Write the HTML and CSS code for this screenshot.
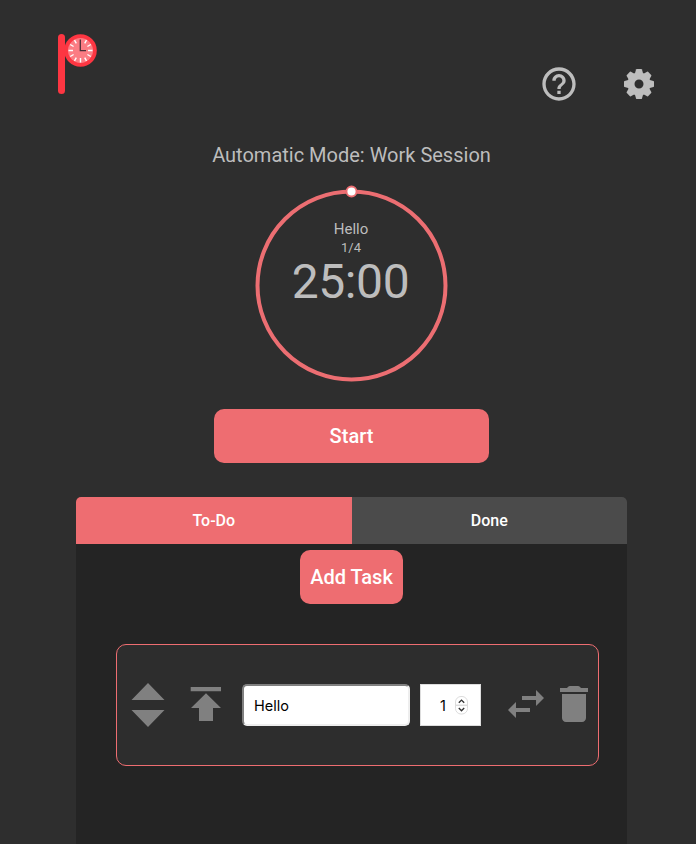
FILE: index.html
```html
<!DOCTYPE html>
<html lang="en">
<head>
<meta charset="utf-8">
<title>Pomodoro Timer</title>
<link rel="stylesheet" href="styles.css">
</head>
<body>
<header class="header">
  <svg class="logo" width="40" height="62" viewBox="0 0 40 62">
    <rect x="1" y="1" width="7" height="60" rx="3.5" fill="#fd3642"/>
    <circle cx="23.5" cy="17.5" r="16.3" fill="#fd3642"/>
    <circle cx="23.5" cy="17.5" r="12.5" fill="#fb7d84"/>
    <g stroke="#fff" stroke-width="1.4">
      <path d="M23.5 25v4.5M11.5 17.5H16M31 17.5h4.5M13.2 11.5l3.4 2M13.2 23.5l3.4-2M33.8 11.5l-3.4 2M33.8 23.5l-3.4-2M17.5 7.1l1.8 3.3M29.5 7.1l-1.8 3.3M17.5 27.9l1.8-3.3M29.5 27.9l-1.8-3.3"/>
    </g>
    <path d="M23.3 6.5v11.2H29" fill="none" stroke="#493037" stroke-width="1.3"/>
  </svg>
  <nav class="actions">
    <svg width="40" height="40" viewBox="0 0 24 24"><path d="M11 18h2v-2h-2v2zm1-16C6.48 2 2 6.48 2 12s4.48 10 10 10 10-4.48 10-10S17.52 2 12 2zm0 18c-4.41 0-8-3.59-8-8s3.59-8 8-8 8 3.59 8 8-3.59 8-8 8zm0-14c-2.21 0-4 1.79-4 4h2c0-1.1.9-2 2-2s2 .9 2 2c0 2-3 1.75-3 5h2c0-2.25 3-2.5 3-5 0-2.21-1.79-4-4-4z"/></svg>
    <svg width="36" height="36" viewBox="-18 -18 36 36">
      <defs><path id="tooth" d="M-4.2-10L-3-14.4Q-2.8-15-2.2-15H2.2Q2.8-15 3-14.4L4.2-10z"/></defs>
      <circle class="hub" r="8"/>
      <use href="#tooth"/>
      <use href="#tooth" transform="rotate(45)"/>
      <use href="#tooth" transform="rotate(90)"/>
      <use href="#tooth" transform="rotate(135)"/>
      <use href="#tooth" transform="rotate(180)"/>
      <use href="#tooth" transform="rotate(225)"/>
      <use href="#tooth" transform="rotate(270)"/>
      <use href="#tooth" transform="rotate(315)"/>
    </svg>
  </nav>
</header>
<main class="main">
  <h1 class="mode">Automatic Mode: Work Session</h1>
  <section class="timer">
    <svg class="ring" width="194" height="200" viewBox="0 0 194 200">
      <circle cx="96.5" cy="101.5" r="94" fill="none" stroke="#ec6e72" stroke-width="4"/>
      <circle cx="96.5" cy="7.5" r="5" fill="#fff" stroke="#ec6e72" stroke-width="1.8"/>
    </svg>
    <div class="task-name">Hello</div>
    <div class="count">1/4</div>
    <div class="clock">25:00</div>
  </section>
  <button class="btn start">Start</button>
  <section class="panel">
    <div class="tabs">
      <button class="tab active">To-Do</button>
      <button class="tab">Done</button>
    </div>
    <button class="btn add">Add Task</button>
    <div class="task">
      <svg class="sort" width="34" height="44" viewBox="0 0 34 44"><path d="M17 0l16.5 17H.5zM.5 27h33L17 44z"/></svg>
      <svg class="top" width="32" height="36" viewBox="0 0 32 36"><path d="M.7 1H31v4.2H.7zM16 7.3L31 22h-8v13H9V22H1z"/></svg>
      <div class="field name">Hello</div>
      <div class="field amount">1
        <svg width="13" height="19" viewBox="0 0 13 19"><rect x=".5" y=".5" width="12" height="17.5" rx="5.5" fill="#fff" stroke="#dcdcdc"/><path class="divider" d="M1 9.3h11"/><path class="chevrons" d="M3.8 6.7l2.7-2.6 2.7 2.6M3.8 12.1l2.7 2.6 2.7-2.6"/></svg>
      </div>
      <svg class="swap" width="48" height="48" viewBox="0 0 24 24"><path d="M6.99 11L3 15l3.99 4v-3H14v-2H6.99v-3zM21 9l-3.99-4v3H10v2h7.01v3L21 9z"/></svg>
      <svg class="trash" width="48" height="48" viewBox="0 0 24 24"><path d="M6 19c0 1.1.9 2 2 2h8c1.1 0 2-.9 2-2V7H6v12zM19 4h-3.5l-.6-.65Q14.6 3 14 3h-4q-.6 0-.9.35L8.5 4H5v2h14V4z"/></svg>
    </div>
  </section>
</main>
</body>
</html>
```
FILE: styles.css
```css
* { box-sizing: border-box; }
html, body { height: 100%; }
body {
  margin: 0;
  height: 844px;
  overflow: hidden;
  display: flex;
  flex-direction: column;
  background: #2e2e2e;
  color: #bdbdbd;
  font-family: Roboto, sans-serif;
}
svg { display: block; flex: none; }
button { border: 0; padding: 0; font-family: inherit; color: #fff; }

.header {
  flex: none;
  height: 143px;
  padding: 33px 39px 0 57px;
  display: flex;
  justify-content: space-between;
  align-items: flex-start;
}
.actions {
  display: flex;
  align-items: center;
  gap: 42px;
  padding-top: 31px;
  fill: #bdbdbd;
}
.hub { fill: none; stroke: #bdbdbd; stroke-width: 7; }
.main {
  flex: 1;
  display: flex;
  flex-direction: column;
  align-items: center;
  padding-left: 7px;
}
.mode {
  margin: 0;
  font-size: 20px;
  line-height: 24px;
  font-weight: 400;
}
.timer {
  position: relative;
  width: 194px;
  height: 200px;
  margin-top: 17px;
  padding-top: 35px;
  text-align: center;
}
.ring { position: absolute; left: 0; top: 0; }
.task-name { font-size: 15px; line-height: 20px; margin-right: 1px; }
.count { font-size: 13px; line-height: 17px; margin-right: 1px; }
.clock { font-size: 48px; line-height: 52px; letter-spacing: -0.4px; margin-right: 2px; }
.btn {
  height: 54px;
  border-radius: 10px;
  background: #ee6d71;
  font-size: 20px;
  font-weight: 500;
}
.start { width: 275px; margin-top: 25px; }
.panel {
  flex: 1;
  width: 551px;
  margin-top: 34px;
  display: flex;
  flex-direction: column;
  align-items: center;
  background: #242424;
  border-radius: 5px 5px 0 0;
  overflow: hidden;
}
.tabs { display: flex; width: 100%; height: 47px; }
.tab {
  flex: 1;
  background: #4b4b4b;
  font-size: 16px;
  font-weight: 500;
}
.active { background: #ee6d71; }
.add { width: 103px; margin-top: 6px; }
.task {
  width: 483px;
  height: 122px;
  margin: 40px 0 0 12px;
  padding-left: 14px;
  display: flex;
  align-items: center;
  border: 1px solid #ee6d71;
  border-radius: 10px;
  background: #2d2d2d;
  fill: #808080;
}
.top { margin: 0 20px 2px 25px; }
.field {
  height: 42px;
  display: flex;
  align-items: center;
  background: #fff;
  color: #000;
  font-family: Inter, sans-serif;
  font-size: 14.5px;
}
.name {
  width: 168px;
  padding-left: 10px;
  border: 2px solid #808080;
  border-right-color: #eee;
  border-bottom-color: #eee;
  border-radius: 5px;
}
.amount {
  width: 61px;
  margin-left: 10px;
  padding-left: 19px;
  gap: 9px;
  border: 1px solid #ddd;
}
.divider { stroke: #dcdcdc; stroke-width: 1.5; }
.chevrons { fill: none; stroke: #333; stroke-width: 1.4; }
.swap, .trash { margin-bottom: 2px; }
.swap { margin-left: 21px; }
```
